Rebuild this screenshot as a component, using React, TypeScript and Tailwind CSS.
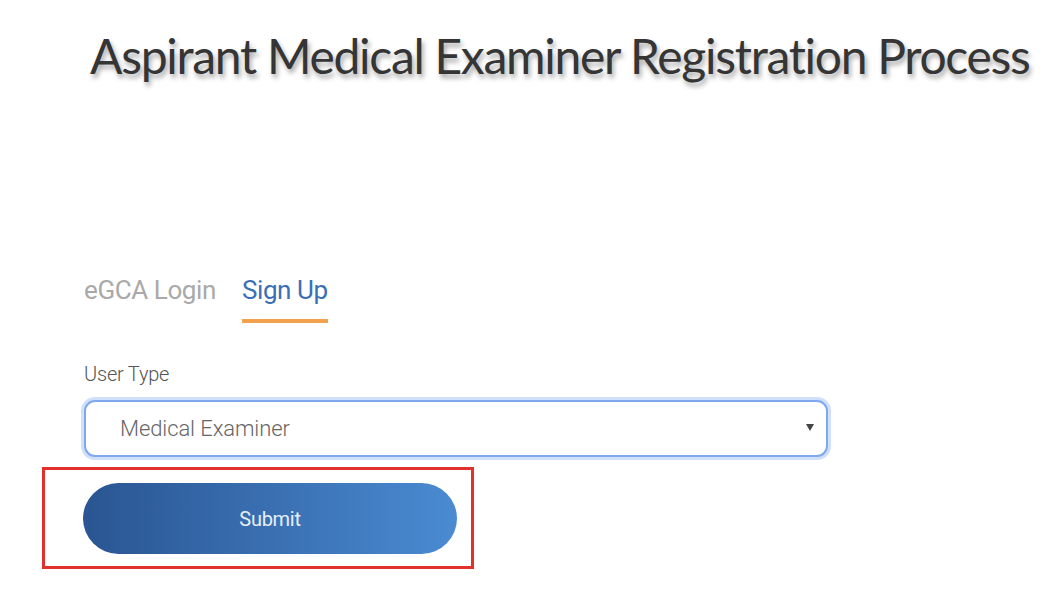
import React, { useState } from 'react';

const App: React.FC = () => {
  const [tab, setTab] = useState<'login' | 'signup'>('signup');
  const [userType, setUserType] = useState('Medical Examiner');

  return (
    <div className="w-[1064px] h-[612px] bg-white overflow-hidden font-['Roboto',sans-serif]">
      {/* Title */}
      <div className="pt-[26px] pl-[90px]">
        <h1 className="font-['Lato',sans-serif] text-[48px] leading-[60px] tracking-[-1.3px] text-[#353535] [text-shadow:2px_4px_5px_rgba(0,0,0,0.35)] whitespace-nowrap">
          Aspirant Medical Examiner Registration Process
        </h1>
      </div>

      <div className="pl-[84px] pt-[187px]">
        {/* Tabs */}
        <div className="flex items-start gap-[26px]">
          <button
            onClick={() => setTab('login')}
            className={`text-[26px] leading-[34px] tracking-[-0.4px] pb-[12px] border-b-4 ${tab === 'login' ? 'text-[#3b6fb5] border-[#f2a14c]' : 'text-[#a9a9a9] border-transparent'}`}
          >
            eGCA Login
          </button>
          <button
            onClick={() => setTab('signup')}
            className={`text-[26px] leading-[34px] tracking-[-0.4px] pb-[12px] border-b-4 ${tab === 'signup' ? 'text-[#3b6fb5] border-[#f2a14c]' : 'text-[#a9a9a9] border-transparent'}`}
          >
            Sign Up
          </button>
        </div>

        {/* User type */}
        <div className="mt-[39px]">
          <label className="block text-[20px] leading-[24px] font-light text-[#555555] tracking-[-0.2px]">User Type</label>
          <div className="relative mt-[14px] w-[744px]">
            <select
              value={userType}
              onChange={(e) => setUserType(e.target.value)}
              className="appearance-none w-full h-[57px] pl-[34px] pr-10 rounded-[11px] bg-white border-2 border-[#7fa8ee] shadow-[0_0_0_3px_rgba(150,185,245,0.45)] text-[22px] font-light text-[#666666] tracking-[-0.1px] outline-none"
            >
              <option>Medical Examiner</option>
              <option>Aspirant</option>
            </select>
            <span className="pointer-events-none absolute right-[14px] top-[24px] w-0 h-0 border-l-[4px] border-r-[4px] border-t-[7px] border-l-transparent border-r-transparent border-t-[#444444]" />
          </div>
        </div>
      </div>

      {/* Submit, highlighted */}
      <div className="ml-[42px] mt-[10px] w-[432px] h-[102px] border-[3px] border-[#e2312c] pt-[13px] pl-[38px]">
        <button className="w-[374px] h-[71px] rounded-full bg-gradient-to-r from-[#2a5592] to-[#4a8bd2] text-[#e6eefa] text-[20px] tracking-[-0.3px]">
          Submit
        </button>
      </div>
    </div>
  );
};

export default App;
